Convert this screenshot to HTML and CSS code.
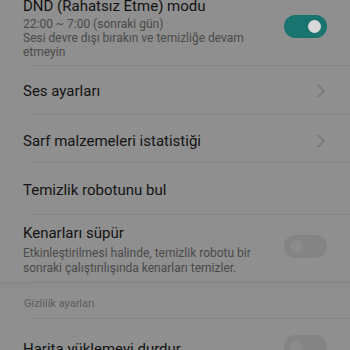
FILE: index.html
```html
<!DOCTYPE html>
<html>
<head>
<meta charset="utf-8">
<link rel="stylesheet" href="styles.css">
</head>
<body>
<div class="screen">
  <div class="row row-multi dnd">
    <div class="texts">
      <div class="title">DND (Rahatsız Etme) modu</div>
      <div class="sub">22:00 ~ 7:00 (sonraki gün)</div>
      <div class="sub">Sesi devre dışı bırakın ve temizliğe devam etmeyin</div>
    </div>
    <div class="toggle on"><span class="knob"></span></div>
  </div>
  <div class="row row-single h49">
    <div class="title">Ses ayarları</div>
    <svg class="chev" width="8" height="14" viewBox="0 0 8 14"><path d="M1 1 L7 7 L1 13" fill="none" stroke="#737373" stroke-width="1.3"/></svg>
  </div>
  <div class="row row-single h48">
    <div class="title">Sarf malzemeleri istatistiği</div>
    <svg class="chev" width="8" height="14" viewBox="0 0 8 14"><path d="M1 1 L7 7 L1 13" fill="none" stroke="#737373" stroke-width="1.3"/></svg>
  </div>
  <div class="row row-single h52">
    <div class="title">Temizlik robotunu bul</div>
  </div>
  <div class="row row-multi kenar">
    <div class="texts">
      <div class="title">Kenarları süpür</div>
      <div class="sub sub2">Etkinleştirilmesi halinde, temizlik robotu bir sonraki çalıştırılışında kenarları temizler.</div>
    </div>
    <div class="toggle off"><span class="knob"></span></div>
  </div>
  <div class="band"></div>
  <div class="section">Gizlilik ayarları</div>
  <div class="row last">
    <div class="title">Harita yüklemeyi durdur</div>
    <div class="toggle off"><span class="knob"></span></div>
  </div>
</div>
</body>
</html>
```
FILE: styles.css
```css
html, body {
  margin: 0;
  padding: 0;
  background: #8f8f8f;
  overflow: hidden;
}
body {
  font-family: Roboto, "Noto Sans", sans-serif;
  color: #131313;
}
.screen {
  width: 350px;
  height: 350px;
  overflow: hidden;
}
.row {
  position: relative;
  display: flex;
  align-items: center;
  justify-content: space-between;
  padding: 0 23px;
  box-sizing: border-box;
}
.row::after {
  content: "";
  position: absolute;
  left: 32px;
  right: 0;
  bottom: 0;
  height: 1px;
  background: #868686;
}
.row.last::after { display: none; }
.title {
  font-size: 15px;
  line-height: 20px;
}
.sub {
  font-size: 12px;
  line-height: 14px;
  color: #4a4a4a;
}
.dnd {
  margin-top: -4px;
  height: 70px;
  align-items: flex-start;
}
.dnd .texts { width: 225px; }
.dnd .title { margin-bottom: 1px; }
.dnd .toggle { margin-top: 19px; }
.h49 { height: 49px; }
.h48 { height: 48px; padding-top: 3px; }
.h52 { height: 52px; padding-top: 2px; }
.kenar {
  height: 67px;
  align-items: flex-start;
  padding-top: 8px;
}
.kenar .texts { width: 240px; }
.kenar .title { margin-bottom: 3px; }
.kenar .sub2 { line-height: 15px; }
.kenar .toggle { margin-top: 12px; }
.toggle {
  position: relative;
  width: 43px;
  height: 23px;
  border-radius: 12px;
  flex: none;
}
.toggle.on { background: #19736e; }
.toggle.off { background: #848484; filter: blur(0.6px); }
.knob {
  position: absolute;
  top: 5px;
  width: 13px;
  height: 13px;
  border-radius: 50%;
}
.on .knob { right: 6px; background: #d9d9d9; }
.off .knob { left: 6px; background: #8b8b8b; }
.chev { flex: none; margin-right: 2px; }
.band {
  height: 6px;
  border-top: 1px solid #858585;
  border-bottom: 1px solid #8a8a8a;
  background: #8c8c8c;
  box-sizing: border-box;
}
.section {
  position: relative;
  height: 31px;
  padding-left: 24px;
  font-size: 11px;
  line-height: 31px;
  color: #5c5c5c;
}
.section::after {
  content: "";
  position: absolute;
  left: 32px;
  right: 0;
  bottom: 0;
  height: 1px;
  background: #868686;
}
.last {
  height: 40px;
  align-items: flex-start;
  padding-top: 16px;
}
.last .title { margin-top: 4px; }
```
